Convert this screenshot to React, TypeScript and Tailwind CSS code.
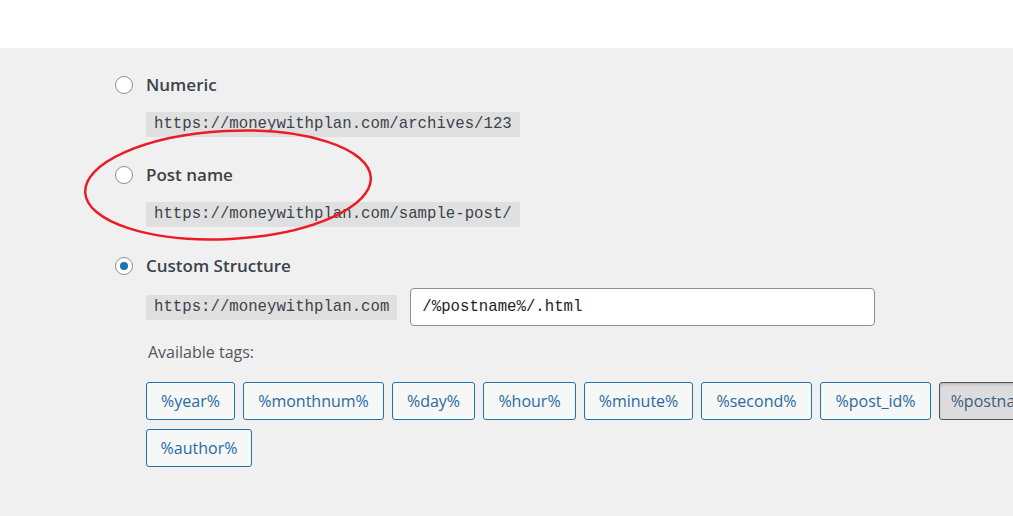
import React from "react";

const row1 = [
  { label: "%year%", w: "w-[89px]" },
  { label: "%monthnum%", w: "w-[141px]" },
  { label: "%day%", w: "w-[83px]" },
  { label: "%hour%", w: "w-[93px]" },
  { label: "%minute%", w: "w-[109px]" },
  { label: "%second%", w: "w-[111px]" },
  { label: "%post_id%", w: "w-[111px]" },
  { label: "%postname%", w: "w-[125px]", active: true },
];

const row2 = [{ label: "%author%", w: "w-[106px]" }];

const Radio = ({ checked }: { checked?: boolean }) => (
  <span className="w-[18px] h-[18px] rounded-full border border-[#8c8f94] bg-white flex items-center justify-center shrink-0">
    {checked && <span className="w-[8px] h-[8px] rounded-full bg-[#2271b1]" />}
  </span>
);

const Code = ({ children }: { children: React.ReactNode }) => (
  <code className="inline-block bg-[#e0e0e1] px-[8px] h-[25px] leading-[25px] text-[15.7px] text-[#3c434a] [font-family:'Liberation_Mono',monospace]">
    {children}
  </code>
);

const Option = ({ label, checked }: { label: string; checked?: boolean }) => (
  <label className="flex items-center gap-[13px] h-[20px]">
    <Radio checked={checked} />
    <span className="text-[17px] font-semibold text-[#3c434a]">{label}</span>
  </label>
);

const Tag = ({ label, w, active }: { label: string; w: string; active?: boolean }) => (
  <button
    className={`${w} h-[38px] shrink-0 rounded-[3px] border text-[16px] ${
      active
        ? "bg-[#dcdcde] border-[#50575e] shadow-[inset_0_2px_5px_-3px_rgba(0,0,0,0.5)] text-[#3c5e7c]"
        : "bg-[#f6f7f7] border-[#2271b1] text-[#2a6aa3]"
    }`}
  >
    {label}
  </button>
);

export default function App() {
  return (
    <div className="relative w-full h-[516px] overflow-hidden bg-[#f0f0f1] [font-family:'Open_Sans',sans-serif]">
      <div className="h-[48px] bg-white" />
      <div className="pl-[115px] pt-[27px]">
        <Option label="Numeric" />
        <div className="pl-[31px] mt-[15px]">
          <Code>https://moneywithplan.com/archives/123</Code>
        </div>

        <div className="mt-[28px]">
          <Option label="Post name" />
        </div>
        <div className="pl-[31px] mt-[15px]">
          <Code>https://moneywithplan.com/sample-post/</Code>
        </div>

        <div className="mt-[29px]">
          <Option label="Custom Structure" checked />
        </div>
        <div className="pl-[31px] mt-[12px] flex items-center gap-[13px]">
          <Code>https://moneywithplan.com</Code>
          <input
            readOnly
            value="/%postname%/.html"
            className="w-[465px] h-[38px] bg-white border border-[#8c8f94] rounded-[4px] px-[11px] text-[15.7px] text-[#1d2327] outline-none [font-family:'Liberation_Mono',monospace]"
          />
        </div>
        <p className="pl-[33px] mt-[16px] h-[20px] leading-[20px] text-[16px] text-[#50575e]">
          Available tags:
        </p>
        <div className="pl-[31px] mt-[20px] flex flex-col gap-[9px]">
          <div className="flex gap-2">
            {row1.map((t) => (
              <Tag key={t.label} {...t} />
            ))}
          </div>
          <div className="flex gap-2">
            {row2.map((t) => (
              <Tag key={t.label} {...t} />
            ))}
          </div>
        </div>
      </div>

      <svg className="absolute left-0 top-0 pointer-events-none" width="1013" height="516">
        <ellipse
          cx="228"
          cy="185"
          rx="143"
          ry="54"
          fill="none"
          stroke="#ec1c24"
          strokeWidth="2.5"
          transform="rotate(-3 228 185)"
        />
      </svg>
    </div>
  );
}
